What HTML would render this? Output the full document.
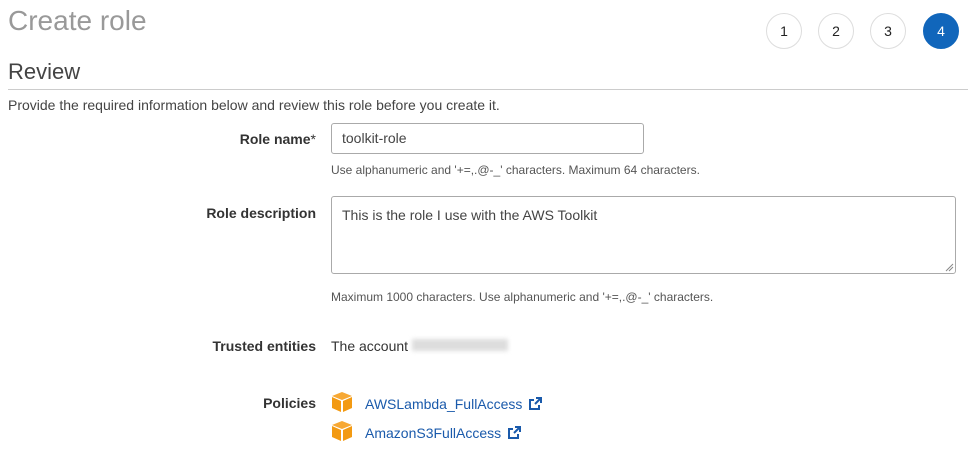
<!DOCTYPE html>
<html><head><meta charset="utf-8"><style>
body{margin:0;width:979px;height:450px;background:#fff;font-family:"Liberation Sans",Arial,sans-serif;color:#444;position:relative;overflow:hidden}
.a{position:absolute}
h1{position:absolute;left:8px;top:5px;margin:0;font-weight:normal;font-size:28px;color:#999}
h2{position:absolute;left:8px;top:59px;margin:0;font-weight:normal;font-size:22px;color:#444}
.hr{position:absolute;left:8px;top:89px;width:960px;border-top:1px solid #ccc}
.c{position:absolute;top:13px;width:34px;height:34px;border:1px solid #ddd;border-radius:50%;text-align:center;line-height:34px;font-size:14px;color:#222;background:#fff}
.c.on{background:#1166bb;border-color:#1166bb;color:#fff}
.lbl{position:absolute;right:663px;font-weight:bold;font-size:14px;color:#333;text-align:right}
.hint{position:absolute;left:331px;font-size:12px;color:#555}
.in{position:absolute;left:331px;border:1px solid #aaa;border-radius:3px;box-sizing:border-box;font-size:14px;color:#444;padding-left:10px}
.lnk{position:absolute;left:365px;font-size:14px;color:#1a5aab}
.box{position:absolute;left:331px;width:22px;height:22px}
</style></head><body>
<h1>Create role</h1>
<div class="c" style="left:766px">1</div>
<div class="c" style="left:818px">2</div>
<div class="c" style="left:870px">3</div>
<div class="c on" style="left:923px">4</div>
<h2>Review</h2>
<div class="hr"></div>
<div class="a" style="left:8px;top:97px;font-size:14px;color:#444">Provide the required information below and review this role before you create it.</div>

<div class="lbl" style="top:131px">Role name<span style="font-weight:normal">*</span></div>
<div class="in" style="top:123px;width:313px;height:31px;line-height:29px">toolkit-role</div>
<div class="hint" style="top:163px">Use alphanumeric and '+=,.@-_' characters. Maximum 64 characters.</div>

<div class="lbl" style="top:205px">Role description</div>
<div class="in" style="top:196px;width:625px;height:78px;padding-top:10px">This is the role I use with the AWS Toolkit</div>
<svg class="a" style="left:945px;top:263px" width="9" height="9"><path d="M1 8L8 1M4 8L8 4" stroke="#888" stroke-width="1"/></svg>
<div class="hint" style="top:290px">Maximum 1000 characters. Use alphanumeric and '+=,.@-_' characters.</div>

<div class="lbl" style="top:338px">Trusted entities</div>
<div class="a" style="left:331px;top:338px;font-size:14px;color:#333">The account</div>
<div class="a" style="left:412px;top:339px;width:96px;height:12px;background:#ddd;filter:blur(2px)"></div>

<div class="lbl" style="top:395px">Policies</div>
<svg class="box" style="top:391px" viewBox="0 0 22 22"><path d="M11 1L21 5L11 9L1 5Z" fill="#f7a833"/><path d="M1 6L10 10V21L1 17Z" fill="#f39a12"/><path d="M12 10L21 6V17L12 21Z" fill="#f39a12"/></svg>
<a class="lnk" style="top:396px">AWSLambda_FullAccess</a>
<svg class="a" style="left:528px;top:397px" width="14" height="14" viewBox="0 0 14 14"><path d="M6 3H2V12H11V8" fill="none" stroke="#1a5aab" stroke-width="2"/><path d="M7 7L12 2M8 1H13V6" fill="none" stroke="#1a5aab" stroke-width="2"/></svg>
<svg class="box" style="top:420px" viewBox="0 0 22 22"><path d="M11 1L21 5L11 9L1 5Z" fill="#f7a833"/><path d="M1 6L10 10V21L1 17Z" fill="#f39a12"/><path d="M12 10L21 6V17L12 21Z" fill="#f39a12"/></svg>
<a class="lnk" style="top:425px">AmazonS3FullAccess</a>
<svg class="a" style="left:507px;top:426px" width="14" height="14" viewBox="0 0 14 14"><path d="M6 3H2V12H11V8" fill="none" stroke="#1a5aab" stroke-width="2"/><path d="M7 7L12 2M8 1H13V6" fill="none" stroke="#1a5aab" stroke-width="2"/></svg>
</body></html>
